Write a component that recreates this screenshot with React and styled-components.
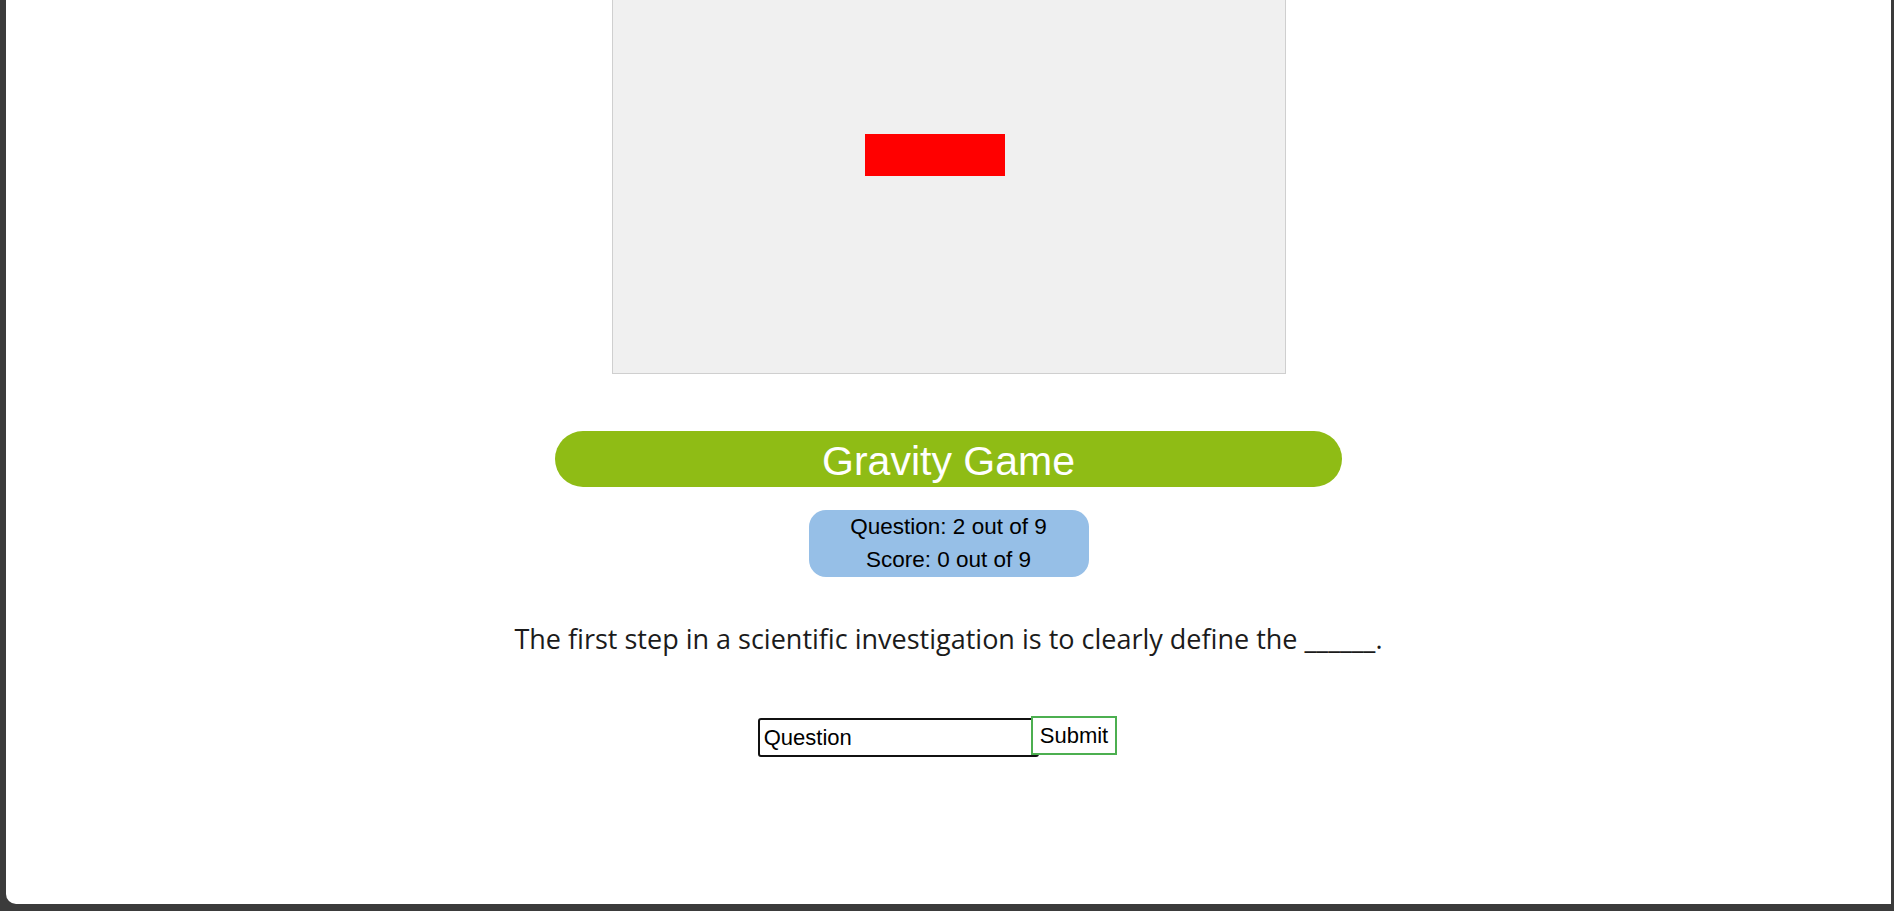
import React from 'react';
import styled, { createGlobalStyle } from 'styled-components';

const GlobalStyle = createGlobalStyle`
  html, body {
    margin: 0;
    padding: 0;
    height: 100%;
    background: #3b3b3b;
    font-family: "Liberation Sans", Arial, sans-serif;
  }
  #root {
    height: 100%;
  }
`

const Frame = styled.div`
  height: 100vh;
  box-sizing: border-box;
  padding: 0 3px 7px 6px;
`
const Panel = styled.main`
  height: 100%;
  background: #ffffff;
  border-bottom-left-radius: 10px;
  overflow: hidden;
  display: flex;
  flex-direction: column;
  align-items: center;
`
const GameCanvas = styled.div`
  position: relative;
  width: 672px;
  height: 373px;
  margin-top: -1px;
  background: #f0f0f0;
  border: 1px solid #cfcfcf;
  flex-shrink: 0;
`
const Block = styled.div`
  position: absolute;
  left: ${p => p.x}px;
  top: ${p => p.y}px;
  width: ${p => p.w}px;
  height: ${p => p.h}px;
  background: #ff0000;
`
const Banner = styled.h1`
  margin: 57px 0 0;
  width: 787px;
  height: 56px;
  box-sizing: border-box;
  padding-top: 4px;
  border-radius: 28px;
  background: #8fbc15;
  color: #ffffff;
  font-family: "Liberation Sans", Arial, sans-serif;
  font-weight: normal;
  font-size: 41px;
  line-height: 52px;
  text-align: center;
`
const ScoreBox = styled.div`
  margin-top: 23px;
  width: 280px;
  height: 67px;
  border-radius: 17px;
  background: #96bfe7;
  color: #000000;
  font-size: 22.5px;
  line-height: 33px;
  text-align: center;
`
const QuestionText = styled.p`
  margin: 42px 0 0;
  font-family: "Open Sans", "Noto Sans", sans-serif;
  font-size: 27px;
  line-height: 40px;
  color: #1b1b1b;
  text-align: center;
`
const AnswerRow = styled.form`
  margin-top: 57px;
  display: flex;
  align-items: flex-start;
  padding-right: 22px;
`
const AnswerInput = styled.input`
  margin-top: 2px;
  width: 281px;
  height: 39px;
  box-sizing: border-box;
  padding: 0 4px;
  border: 2px solid #111111;
  border-radius: 3px;
  font-family: "Liberation Sans", Arial, sans-serif;
  font-size: 22px;
  color: #000000;
  background: #ffffff;
  outline: none;
`
const SubmitButton = styled.button`
  margin-left: -8px;
  height: 39px;
  box-sizing: border-box;
  padding: 0 7px;
  border: 2px solid #4caf50;
  border-radius: 0;
  background: #ffffff;
  color: #000000;
  font-family: "Liberation Sans", Arial, sans-serif;
  font-size: 22px;
  line-height: 33px;
  cursor: pointer;
`

const App = () => {
  const question = 2;
  const score = 0;
  const total = 9;

  return (
    <Frame>
      <GlobalStyle />
      <Panel>
        <GameCanvas>
          <Block x={252} y={134} w={140} h={42} />
        </GameCanvas>
        <Banner>Gravity Game</Banner>
        <ScoreBox>
          <div>Question: {question} out of {total}</div>
          <div>Score: {score} out of {total}</div>
        </ScoreBox>
        <QuestionText>
          The first step in a scientific investigation is to clearly define the ______.
        </QuestionText>
        <AnswerRow onSubmit={e => e.preventDefault()}>
          <AnswerInput type="text" defaultValue="Question" />
          <SubmitButton type="submit">Submit</SubmitButton>
        </AnswerRow>
      </Panel>
    </Frame>
  );
}

export default App;
